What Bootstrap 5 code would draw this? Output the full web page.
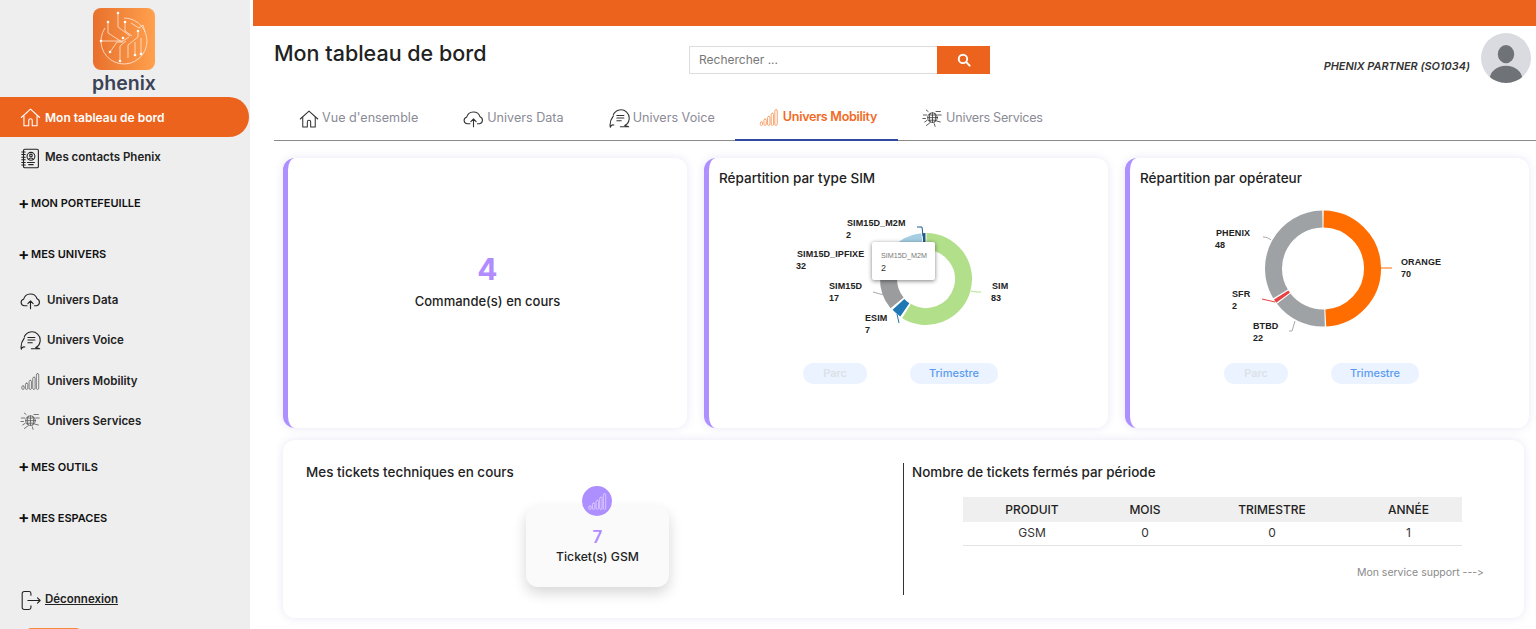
<!DOCTYPE html>
<html lang="fr">
<head>
  <meta charset="UTF-8">
  <meta name="viewport" content="width=device-width, initial-scale=1">
  <title>Phenix - Mon tableau de bord</title>
  <link href="https://cdn.jsdelivr.net/npm/bootstrap@5.3.3/dist/css/bootstrap.min.css" rel="stylesheet">
  <style>
    html, body { height: 100%; overflow: hidden; }
    body { font-family: Inter, "Noto Sans", sans-serif; color: #222; background: #fff; font-variant-ligatures: none; font-feature-settings: "calt" 0; }
    .ico { fill: none; stroke: currentColor; stroke-width: 1.25; stroke-linecap: round; stroke-linejoin: round; flex: none; }
    .ico-thin { stroke-width: .9; }

    /* sidebar */
    .side { width: 250px; flex: none; background: #eee; height: 100vh; overflow: hidden; }
    .brand { height: 97px; padding: 8px 2px 0 0; }
    .brand-name { font-size: 19.5px; font-weight: 600; color: #3b4356; line-height: 20px; margin-top: 3px; }
    .side-link { display: flex; align-items: center; height: 40.4px; padding: 1px 0 0 20px; color: #222; font-size: 11.5px; font-weight: 600; text-decoration: none; }
    .side-link .ico { margin-right: 4px; color: #222; }
    .side-link .ico-thin { color: #555; }
    .side-link.sub .ico { margin-right: 6px; }
    .side-link.on { background: #eb631d; color: #fff; font-size: 12px; margin-right: 1px; border-radius: 0 20px 20px 0; }
    .side-link.on .ico { color: #fff; }
    .side-head { display: flex; align-items: center; height: 51px; padding-left: 18px; font-size: 11px; font-weight: 600; color: #111; }
    .side-head b { font-size: 17px; font-weight: 600; width: 13px; line-height: 1; }
    .logout { margin-top: 36px; text-decoration: underline; }
    .side-stub { width: 53px; height: 8px; margin: 8px 0 0 27px; background: #f58a3c; border-radius: 4px 4px 0 0; }

    /* main */
    .main { margin-left: 3px; min-width: 0; }
    .topbar { height: 26px; background: #eb631d; }
    .head-row { height: 64px; padding: 0 5px 0 21px; }
    .page-title { width: 415px; font-size: 21.5px; font-weight: 500; margin: 0 0 8px; color: #222; }
    .search { width: 301px; height: 28px; margin-top: 4px; }
    .search .form-control { height: 28px; font-size: 12px; border-radius: 0; border-color: #ddd; padding: 0 9px 2px; }
    .search .form-control::placeholder { color: #777; }
    .search .btn { width: 53px; background: #eb631d; border: 0; border-radius: 0; color: #fff; padding: 0; }
    .user-name { font-size: 10.9px; font-weight: 600; font-style: italic; color: #333; margin: 16px 11px 0 0; }
    .avatar { width: 50px; height: 50px; }

    .tabs-line { height: 51px; margin-left: 21px; padding-left: 2px; border-bottom: 1px solid #8a8a8a; }
    .tab-link { display: flex; align-items: center; height: 51px; padding: 6px 23px 0; font-size: 12.6px; color: #8b8b96; text-decoration: none; margin-right: -1px; }
    .tab-link .ico { color: #333; margin-right: 3px; }
    .tab-link.on { color: #f26a25; font-weight: 600; letter-spacing: -.3px; padding-right: 21px; margin: 0 1px 0 -2px; border-bottom: 2px solid #2f4a9e; }
    .tab-link.on .ico { color: #f5a26d; }
    .tab-tight { letter-spacing: -.25px; }

    .panels { display: grid; grid-template-columns: repeat(3, 404px); gap: 17px; margin: 17px 0 0 30px; }
    .panel { height: 270px; background: #fff; border-radius: 12px; border-left: 5px solid #ae8fff; box-shadow: 0 0 8px rgba(110, 100, 200, .16); }
    .panel-title { font-size: 13.5px; font-weight: 500; margin: 0; padding: 12px 0 0 10px; height: 42px; color: #222; }
    .big-num { font-size: 30px; font-weight: 700; color: #b18cff; line-height: 36px; }
    .big-label { font-size: 13px; font-weight: 500; color: #222; margin-top: 5px; }
    .chart-box { height: 163px; }
    .chart-box svg { display: block; }
    .lbl { font-family: "Liberation Sans", Arial, sans-serif; font-size: 9px; font-weight: 700; fill: #222; letter-spacing: .1px; }
    .chip { border: 0; border-radius: 10px; height: 21px; background: #eaf3ff; font-size: 11px; font-weight: 500; padding: 0; }
    .chip-off { width: 64px; color: #dcdfe3; }
    .chip-on { width: 88px; color: #5a9bf0; }
    .chip-row { gap: 43px; padding-right: 16px; }
    .tip { position: absolute; left: 163px; top: 42px; width: 63px; height: 38px; background: #fff; border-radius: 2px; box-shadow: 0 1px 4px rgba(0, 0, 0, .5); padding: 8px 0 0 9px; font-family: "Liberation Sans", Arial, sans-serif; font-size: 7.2px; color: #777; line-height: 12px; }
    .tip b { display: block; color: #333; font-weight: 400; font-size: 9px; }

    .wide-panel { width: 1241px; height: 178px; margin: 12px 0 0 30px; background: #fff; border-radius: 12px; box-shadow: 0 0 8px rgba(110, 100, 200, .16); padding-top: 23px; }
    .wide-left { width: 620px; flex: none; padding-left: 23px; }
    .wide-right { height: 132px; flex: 1; border-left: 1px solid #333; padding-left: 8px; }
    .wide-title { font-size: 13.45px; font-weight: 500; margin: 0 0 1px; padding-top: 1px; color: #222; }
    .tile-wrap { width: 143px; margin: 26px 0 0 220px; position: relative; }
    .tile { height: 81px; background: #fafafa; border-radius: 12px; box-shadow: 0 6px 14px rgba(0, 0, 0, .16); padding-top: 21px; text-align: center; }
    .tile-num { font-size: 17px; font-weight: 600; color: #b18cff; line-height: 20px; }
    .tile-label { font-size: 12.2px; font-weight: 500; line-height: 20px; }
    .tile-dot { position: absolute; left: 56px; top: -20px; width: 30px; height: 30px; border-radius: 50%; background: #ae8fff; color: #e9ddff; display: flex; align-items: center; justify-content: center; }
    .ticket-table { width: 499px; margin: 17px 0 0 51px; font-size: 12px; table-layout: fixed; }
    .ticket-table th, .ticket-table td { text-align: center; padding: 0; height: 24px; font-weight: 400; color: #333; }
    .ticket-table th { background: #efefef; font-weight: 500; color: #222; height: 25px; padding-top: 1px; }
    .ticket-table td { border-bottom: 1px solid #e3e3e3; height: 23px; }
    .col-prod { width: 138px; } .col-mois { width: 88px; } .col-trim { width: 166px; } .col-annee { width: 107px; }
    .support { font-size: 10.5px; color: #8a8a8a; text-align: right; width: 572px; margin-top: 19px; }
  </style>
</head>
<body>
  <svg width="0" height="0" class="position-absolute">
    <symbol id="i-home" viewBox="0 0 24 24"><path d="M1.500 12 12 2.500 22.500 12"/><path d="M4.500 10v11.500h5.500v-6a2 2 0 0 1 4 0v6h5.500V10"/></symbol>
    <symbol id="i-book" viewBox="0 0 24 24"><rect x="4" y="1.500" width="17" height="21" rx="1.500"/><path d="M2 4.500h4M2 7.500h4M2 10.500h4M2 13.500h4M2 16.500h4M2 19.500h4"/><circle cx="12.500" cy="9.500" r="4.500"/><circle cx="12.500" cy="8.500" r="1.500"/><path d="M10 13c.5-2 4.500-2 5 0M8.500 16.500h8M10 19h5"/></symbol>
    <symbol id="i-cloud" viewBox="0 0 24 24"><path d="M8 18H5a3.800 3.800 0 0 1-.8-7.500A8 8 0 0 1 19.500 10 4.200 4.200 0 0 1 19 18h-2.500"/><path d="M12 21.500V12.500M9 15.500l3-3 3 3"/></symbol>
    <symbol id="i-chat" viewBox="0 0 24 24"><path d="M5 7.500A9.500 9.500 0 1 1 18 20l4.500 1.500H13"/><path d="M5 9C2 13 .5 17 1.500 22c.5-2 2-3 4-2.500"/><path d="M9 8.500h8M9 11.500h8M9 14.500h5"/></symbol>
    <symbol id="i-signal" viewBox="0 0 24 24"><rect x="1" y="17.500" width="3" height="4.500" rx="1.500"/><rect x="5.600" y="14" width="3" height="8" rx="1.500"/><rect x="10.200" y="10.500" width="3" height="11.500" rx="1.500"/><rect x="14.800" y="6.500" width="3" height="15.500" rx="1.500"/><rect x="19.400" y="2" width="3" height="20" rx="1.500"/></symbol>
    <symbol id="i-net" viewBox="0 0 24 24"><circle cx="12" cy="11" r="5.500"/><path d="M6.500 11h11M12 5.500v11M8 7.500c2.500 1 5.500 1 8 0M8 14.500c2.500-1 5.500-1 8 0M9.500 6c-1.500 3-1.500 7 0 10M14.500 6c1.500 3 1.500 7 0 10"/><path d="M1.500 8h4M1 12h3M3 16l3-2M5 20l4-3M7 4 5 2.500M16 4h5M18 8h4M17 15l4 1M14 18l1 3"/></symbol>
    <symbol id="i-out" viewBox="0 0 24 24"><path d="M12.500 6V4a2.200 2.200 0 0 0-2.200-2.200H4.700A2.200 2.200 0 0 0 2.500 4v16a2.200 2.200 0 0 0 2.200 2.200h5.600a2.200 2.200 0 0 0 2.200-2.200v-2"/><path d="M9 12h14M20 9l3 3-3 3"/></symbol>
  </svg>

  <div class="d-flex">
    <aside class="side">
      <div class="brand d-flex flex-column align-items-center">
        <svg width="62" height="62" viewBox="0 0 62 62">
          <defs><linearGradient id="logoGrad"><stop offset="0" stop-color="#e8702c"/><stop offset="1" stop-color="#ffa14e"/></linearGradient></defs>
          <rect width="62" height="62" rx="8" fill="url(#logoGrad)"/>
          <g fill="none" stroke="#ffe9d8" stroke-width=".8">
            <path d="M31 10A23 23 0 1 1 12 20"/>
            <path d="M25 5v14l12 9M15 14v11l14 9M32 14v9l7 5M8 33h22l6-4M17 44l7-10h6M27 53V38l6-5M35 50V37l10-8V23M42 47V34M48 46V30M38 15l8 5 4-3 2 7"/>
          </g>
          <g fill="#fff"><circle cx="25" cy="5" r="1.300"/><circle cx="15" cy="14" r="1.300"/><circle cx="32" cy="14" r="1.300"/><circle cx="8" cy="33" r="1.300"/><circle cx="17" cy="44" r="1.300"/><circle cx="27" cy="53" r="1.300"/><circle cx="42" cy="47" r="1.300"/><circle cx="48" cy="46" r="1.300"/><circle cx="45" cy="23" r="1.300"/><circle cx="30" cy="30" r="1.300"/></g>
        </svg>
        <div class="brand-name">phenix</div>
      </div>
      <a class="side-link on" href="#"><svg class="ico" width="21" height="21"><use href="#i-home"/></svg>Mon tableau de bord</a>
      <a class="side-link" href="#"><svg class="ico" width="21" height="25"><use href="#i-book"/></svg>Mes contacts Phenix</a>
      <div class="side-head"><b>+</b>MON PORTEFEUILLE</div>
      <div class="side-head"><b>+</b>MES UNIVERS</div>
      <a class="side-link sub" href="#"><svg class="ico" width="21" height="21"><use href="#i-cloud"/></svg>Univers Data</a>
      <a class="side-link sub" href="#"><svg class="ico" width="21" height="21"><use href="#i-chat"/></svg>Univers Voice</a>
      <a class="side-link sub" href="#"><svg class="ico ico-thin" width="21" height="19"><use href="#i-signal"/></svg>Univers Mobility</a>
      <a class="side-link sub" href="#"><svg class="ico ico-thin" width="21" height="21"><use href="#i-net"/></svg>Univers Services</a>
      <div class="side-head"><b>+</b>MES OUTILS</div>
      <div class="side-head"><b>+</b>MES ESPACES</div>
      <a class="side-link logout" href="#"><svg class="ico" width="21" height="21"><use href="#i-out"/></svg>Déconnexion</a>
      <div class="side-stub"></div>
    </aside>

    <main class="main flex-grow-1">
      <div class="topbar"></div>
      <div class="head-row d-flex align-items-center">
        <h1 class="page-title">Mon tableau de bord</h1>
        <form class="search input-group flex-nowrap">
          <input type="text" class="form-control" placeholder="Rechercher ...">
          <button type="button" class="btn d-flex align-items-center justify-content-center">
            <svg width="14" height="14" viewBox="0 0 16 16" fill="none" stroke="currentColor" stroke-width="2.200" stroke-linecap="round"><circle cx="6.800" cy="6.800" r="4.800"/><path d="m10.500 10.500 4 4"/></svg>
          </button>
        </form>
        <div class="ms-auto d-flex align-items-center">
          <div class="user-name">PHENIX PARTNER (SO1034)</div>
          <svg class="avatar" viewBox="0 0 52 52"><defs><clipPath id="avClip"><circle cx="26" cy="26" r="26"/></clipPath></defs><circle cx="26" cy="26" r="26" fill="#d9dbe0"/><g clip-path="url(#avClip)" fill="#6f7378"><ellipse cx="26" cy="22" rx="8.500" ry="9.500"/><ellipse cx="26" cy="48" rx="17" ry="14"/></g></svg>
        </div>
      </div>

      <nav class="tabs-line d-flex">
        <a class="tab-link" href="#"><svg class="ico" width="20" height="20"><use href="#i-home"/></svg>Vue d'ensemble</a>
        <a class="tab-link" href="#"><svg class="ico" width="21" height="21"><use href="#i-cloud"/></svg>Univers Data</a>
        <a class="tab-link" href="#"><svg class="ico" width="21" height="21"><use href="#i-chat"/></svg>Univers Voice</a>
        <a class="tab-link on" href="#"><svg class="ico" width="22" height="19"><use href="#i-signal"/></svg>Univers Mobility</a>
        <a class="tab-link tab-tight" href="#"><svg class="ico ico-thin" width="21" height="21"><use href="#i-net"/></svg>Univers Services</a>
      </nav>

      <section class="panels">
        <div class="panel d-flex flex-column align-items-center justify-content-center">
          <div class="big-num">4</div>
          <div class="big-label">Commande(s) en cours</div>
          <div class="pb-4"></div>
        </div>

        <div class="panel">
          <h2 class="panel-title">Répartition par type SIM</h2>
          <div class="chart-box position-relative">
            <svg id="chartSim" width="399" height="163">
              <g fill="none" stroke-width="1">
                <path d="M208 27h5l1 9" stroke="#1f5c87"/>
                <path d="M262 91c3 1 7 1 10 1" stroke="#b2df8a"/>
                <path d="M164 92l11 3" stroke="#aaa"/>
                <path d="M188 114l2 9" stroke="#1f78b4"/>
              </g>
              <g class="lbl">
                <text x="138" y="26">SIM15D_M2M</text><text x="137" y="38">2</text>
                <text x="88" y="57">SIM15D_IPFIXE</text><text x="87" y="69">32</text>
                <text x="120" y="89">SIM15D</text><text x="120" y="101">17</text>
                <text x="156" y="121">ESIM</text><text x="156" y="133">7</text>
                <text x="283" y="89">SIM</text><text x="282" y="101">83</text>
              </g>
            </svg>
            <div class="tip">SIM15D_M2M<b>2</b></div>
          </div>
          <div class="chip-row d-flex justify-content-center">
            <button type="button" class="chip chip-off">Parc</button>
            <button type="button" class="chip chip-on">Trimestre</button>
          </div>
        </div>

        <div class="panel">
          <h2 class="panel-title">Répartition par opérateur</h2>
          <div class="chart-box">
            <svg id="chartOp" width="399" height="163">
              <g fill="none" stroke-width="1">
                <path d="M251 68h11" stroke="#ff6d00"/>
                <path d="M133 37c3 0 6 1 8 3" stroke="#aaa"/>
                <path d="M132 99l13 3" stroke="#e84040"/>
                <path d="M165 121l-3 10h-3" stroke="#aaa"/>
              </g>
              <g class="lbl">
                <text x="86" y="36">PHENIX</text><text x="85" y="48">48</text>
                <text x="271" y="65">ORANGE</text><text x="271" y="77">70</text>
                <text x="102" y="97">SFR</text><text x="102" y="109">2</text>
                <text x="123" y="129">BTBD</text><text x="123" y="141">22</text>
              </g>
            </svg>
          </div>
          <div class="chip-row d-flex justify-content-center">
            <button type="button" class="chip chip-off">Parc</button>
            <button type="button" class="chip chip-on">Trimestre</button>
          </div>
        </div>
      </section>

      <section class="wide-panel d-flex">
        <div class="wide-left">
          <h2 class="wide-title">Mes tickets techniques en cours</h2>
          <div class="tile-wrap">
            <div class="tile-dot"><svg class="ico ico-thin" width="19" height="19"><use href="#i-signal"/></svg></div>
            <div class="tile">
              <div class="tile-num">7</div>
              <div class="tile-label">Ticket(s) GSM</div>
            </div>
          </div>
        </div>
        <div class="wide-right">
          <h2 class="wide-title">Nombre de tickets fermés par période</h2>
          <table class="ticket-table">
            <thead>
              <tr><th class="col-prod">PRODUIT</th><th class="col-mois">MOIS</th><th class="col-trim">TRIMESTRE</th><th class="col-annee">ANNÉE</th></tr>
            </thead>
            <tbody>
              <tr><td>GSM</td><td>0</td><td>0</td><td>1</td></tr>
            </tbody>
          </table>
          <div class="support">Mon service support ---&gt;</div>
        </div>
      </section>
    </main>
  </div>

  <script src="https://cdn.jsdelivr.net/npm/bootstrap@5.3.3/dist/js/bootstrap.bundle.min.js"></script>
  <script>
    // Draws a donut as stroked arcs, clockwise from the top
    const donut = (id, cx, cy, r, width, items) => {
      const svg = document.getElementById(id);
      const total = items.reduce((sum, it) => sum + it.value, 0);
      const point = (deg) => {
        const a = (deg - 90) * Math.PI / 180;
        return `${(cx + r * Math.cos(a)).toFixed(2)} ${(cy + r * Math.sin(a)).toFixed(2)}`;
      };
      let start = 0;
      items.forEach((it) => {
        const sweep = it.value / total * 360;
        const path = document.createElementNS('http://www.w3.org/2000/svg', 'path');
        const gap = it.grow ? 2.5 : 0.7;
        path.setAttribute('d', `M${point(start + gap)}A${r} ${r} 0 ${sweep > 180 ? 1 : 0} 1 ${point(start + sweep - gap)}`);
        path.setAttribute('fill', 'none');
        path.setAttribute('stroke', it.color);
        path.setAttribute('stroke-width', it.grow ? width - 1 : width);
        svg.insertBefore(path, svg.firstChild);
        start += sweep;
      });
    };

    donut('chartSim', 217, 79, 37.5, 17, [
      { value: 83, color: '#b2df8a' },
      { value: 7, color: '#1f78b4', grow: true },
      { value: 17, color: '#9b9c9e' },
      { value: 32, color: '#a6cee3' },
      { value: 2, color: '#1f5c87' }
    ]);
    donut('chartOp', 193, 68.5, 49.5, 17, [
      { value: 70, color: '#ff6d00' },
      { value: 22, color: '#9fa2a4' },
      { value: 2, color: '#e84040' },
      { value: 48, color: '#9fa2a4' }
    ]);
  </script>
</body>
</html>
